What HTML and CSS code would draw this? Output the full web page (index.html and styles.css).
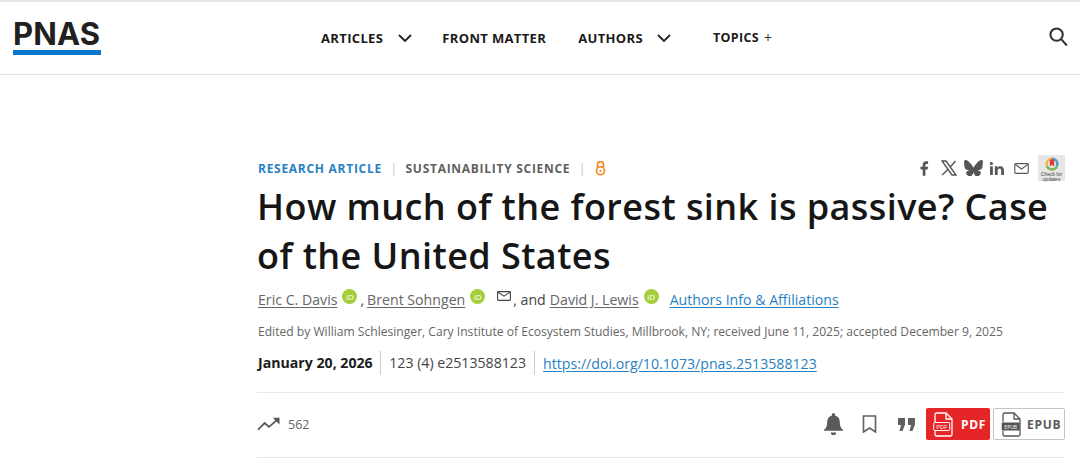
FILE: index.html
```html
<!DOCTYPE html>
<html lang="en">
<head>
<meta charset="utf-8">
<title>PNAS article</title>
<link rel="stylesheet" href="styles.css">
</head>
<body>
<header class="site-header">
  <a class="logo"><span class="logo-text">PNAS</span></a>
  <nav class="nav">
    <a class="nav-item nav-articles">ARTICLES<svg class="chev" viewBox="0 0 14 8"><path d="M1 1l6 6 6-6"/></svg></a>
    <a class="nav-item nav-front">FRONT MATTER</a>
    <a class="nav-item nav-authors">AUTHORS<svg class="chev" viewBox="0 0 14 8"><path d="M1 1l6 6 6-6"/></svg></a>
    <a class="nav-item nav-topics">TOPICS<span class="plus">+</span></a>
  </nav>
  <svg class="search" viewBox="0 0 20 20"><circle cx="8" cy="8" r="6.500"/><path d="M12.800 12.800L18.800 19.500"/></svg>
</header>
<main class="article">
  <div class="meta-row">
    <div class="crumbs">
      <span class="type">RESEARCH ARTICLE</span><span class="bar">|</span><span class="subject">SUSTAINABILITY SCIENCE</span><span class="bar">|</span>
      <svg class="oa" viewBox="0 0 11 15"><path d="M2.500 6.500V3.600a3 3 0 0 1 6 0V6.500"/><circle cx="5.500" cy="9.800" r="4"/><circle cx="5.500" cy="9.800" r="1" class="oa-dot"/></svg>
    </div>
    <div class="share">
      <svg class="s-f" viewBox="0 0 10 16"><path d="M3 16V9H.5V6H3V4c0-2.600 1.500-4 3.800-4H9v3H7.400C6.300 3 6 3.500 6 4.300V6h3l-.5 3H6v7z"/></svg>
      <svg class="s-x" viewBox="0 0 16 16"><path class="x-line" d="M1 1l4 0 10 14-4 0zM14.500 1L9 7.200M6.800 9.600L1.200 15"/></svg>
      <svg class="s-b" viewBox="0 0 20 17"><path d="M4.400 1.200C6.700 2.900 9.100 6.400 10 8.200c.9-1.800 3.300-5.300 5.600-7C17.200 0 20 -.9 20 2.200c0 .6-.4 5.200-.6 5.900-.7 2.500-3.200 3.100-5.500 2.700 4 .7 5 2.900 2.800 5.200-4.200 4.300-6-1.100-6.500-2.500-.1-.3-.2-.4-.2-.3 0-.1-.1 0-.2.300-.5 1.400-2.300 6.800-6.500 2.500-2.200-2.300-1.200-4.500 2.800-5.200-2.300.4-4.800-.2-5.500-2.700C.4 7.400 0 2.800 0 2.200 0-.9 2.800 0 4.400 1.200z"/></svg>
      <svg class="s-in" viewBox="0 0 16 15"><rect x="0" y="5" width="3.200" height="10"/><circle cx="1.600" cy="1.800" r="1.800"/><path d="M5.500 5h3v1.500C9 5.500 10.200 4.800 11.700 4.800 14.800 4.800 16 6.700 16 9.600V15h-3.200v-5c0-1.500-.5-2.400-1.800-2.400-1.300 0-2.300.9-2.300 2.500V15H5.500z"/></svg>
      <svg class="s-m" viewBox="0 0 16 12"><rect x=".7" y=".7" width="14.600" height="10.600" rx="1"/><path d="M1 1.500l7 5 7-5"/></svg>
      <div class="check">
        <svg class="check-ring" viewBox="0 0 14 14"><circle cx="7" cy="7" r="6.500" fill="#f4b63d"/><path d="M7 .5a6.500 6.500 0 0 1 6.500 6.500A6.500 6.500 0 0 1 7 13.500z" fill="#4a9fd0"/><path d="M.8 9A6.500 6.500 0 0 0 7 13.500 6.500 6.500 0 0 0 13.200 9z" fill="#7fb75a"/><circle cx="7" cy="7" r="4" fill="#eee"/><path d="M4.800 2.500h4.400v7L7 8 4.800 9.500z" fill="#e03a3e"/></svg>
        <span class="check-text">Check for updates</span>
      </div>
    </div>
  </div>
  <h1 class="title">How much of the forest sink is passive? Case of the United States</h1>
  <div class="authors">
    <a class="author">Eric C. Davis</a><span class="orcid">iD</span><span class="sep">,</span>
    <a class="author">Brent Sohngen</a><span class="orcid">iD</span>
    <svg class="mail" viewBox="0 0 14 10"><rect x=".6" y=".6" width="12.800" height="8.800" rx=".8"/><path d="M1 1.200l6 4 6-4"/></svg><span class="sep">, and</span>
    <a class="author">David J. Lewis</a><span class="orcid">iD</span>
    <a class="affil">Authors Info &amp; Affiliations</a>
  </div>
  <p class="edited">Edited by William Schlesinger, Cary Institute of Ecosystem Studies, Millbrook, NY; received June 11, 2025; accepted December 9, 2025</p>
  <div class="pub">
    <strong class="pub-date">January 20, 2026</strong>
    <span class="pub-vol">123 (4) e2513588123</span>
    <a class="pub-doi">https://doi.org/10.1073/pnas.2513588123</a>
  </div>
  <div class="tools">
    <div class="metric">
      <svg class="trend" viewBox="0 0 24 14"><path d="M1 13l7-7 4.500 4L22 2"/><path class="fill" d="M16.500 0.500H23.500V7.500z"/></svg>
      <span>562</span>
    </div>
    <div class="actions">
      <svg class="bell" viewBox="0 0 18 21"><path d="M9 0a1.500 1.500 0 0 1 1.500 1.500v.9C13.500 3.100 15 5.600 15 8.500c0 4 1 5.700 3 7.500v1H0v-1c2-1.800 3-3.500 3-7.500 0-2.900 1.500-5.400 4.500-6.100v-.9A1.500 1.500 0 0 1 9 0zM6.500 18.500h5a2.500 2.500 0 0 1-5 0z"/></svg>
      <svg class="bookmark" viewBox="0 0 14 18"><path d="M1 1h12v16l-6-4-6 4z"/></svg>
      <svg class="quote" viewBox="0 0 17 13"><path d="M0 0h7v6.500L4.500 13H1.500L3 7H0zM10 0h7v6.500L14.500 13h-3L13 7h-3z"/></svg>
      <a class="btn btn-pdf">
        <svg class="file" viewBox="0 0 20 25"><path class="file-o" d="M2 10V2.500A1.500 1.500 0 0 1 3.500 1H13l6 6v15.500a1.500 1.500 0 0 1-1.500 1.500h-14A1.500 1.500 0 0 1 2 22.500V19M13 1v6h6"/><rect class="file-tag" x=".7" y="10.500" width="16" height="8" rx="1"/><text x="8.700" y="17" class="tag-text">PDF</text></svg>
        PDF
      </a>
      <a class="btn btn-epub">
        <svg class="file" viewBox="0 0 20 25"><path class="file-o" d="M2 10V2.500A1.500 1.500 0 0 1 3.500 1H13l6 6v15.500a1.500 1.500 0 0 1-1.500 1.500h-14A1.500 1.500 0 0 1 2 22.500V19M13 1v6h6"/><rect class="file-tag" x=".7" y="10.500" width="18" height="8" rx="1"/><text x="9.700" y="16.800" class="tag-text">EPUB</text></svg>
        EPUB
      </a>
    </div>
  </div>
</main>
</body>
</html>
```

FILE: styles.css
```css
* { box-sizing: border-box; }
html, body { margin: 0; padding: 0; }
body {
  width: 1080px;
  height: 468px;
  overflow: hidden;
  background: #fff;
  color: #1f1f1f;
  font-family: "Open Sans", sans-serif;
}
.site-header {
  height: 75px;
  border-top: 2px solid #e6e6e6;
  border-bottom: 1px solid #e0e0e0;
  display: flex;
  align-items: center;
  padding: 0 13px;
}
.logo {
  display: block;
  width: 88px;
  border-bottom: 5px solid #0a78cf;
  height: 33px;
  margin-top: 1px;
}
.logo-text {
  display: block;
  font-family: Inter, sans-serif;
  font-size: 31px;
  line-height: 23px;
  font-weight: 700;
  color: #231f20;
  letter-spacing: .1px;
  white-space: nowrap;
}
.nav {
  display: flex;
  align-items: center;
  margin-left: 220px;
  width: 460px;
  color: #1a1a1a;
}
.nav-item {
  display: flex;
  align-items: center;
  font-size: 13px;
  font-weight: 700;
  letter-spacing: .35px;
  white-space: nowrap;
}
.nav-front { margin-left: 30px; }
.nav-authors { margin-left: 32px; }
.nav-topics { margin-left: 42px; margin-top: -1px; font-size: 12.500px; }
.plus { font-weight: 400; margin-left: 5px; font-size: 14px; color: #333; }
.chev {
  width: 14px;
  height: 8px;
  margin-left: 14px;
  fill: none;
  stroke: #222;
  stroke-width: 1.800;
}
.nav-articles .chev { margin-left: 15px; }
.search {
  width: 19px;
  height: 19px;
  margin-left: auto;
  margin-right: -1px;
  margin-top: -3px;
  fill: none;
  stroke: #333;
  stroke-width: 2.200;
}
.article {
  width: 808px;
  margin-left: 257px;
  padding-top: 81px;
}
.meta-row {
  display: flex;
  justify-content: space-between;
  align-items: center;
  height: 24px;
}
.crumbs {
  display: flex;
  align-items: center;
  font-size: 12px;
  font-weight: 700;
  letter-spacing: .72px;
  padding-left: 1px;
}
.type { color: #2a7fc1; }
.subject { color: #5f5f5f; }
.bar { color: #c4c4c4; font-weight: 400; margin: 0 8.500px; font-size: 12px; letter-spacing: 0; }
.oa {
  width: 11px;
  height: 15px;
  fill: none;
  stroke: #f68212;
  stroke-width: 1.600;
  margin-left: 1px;
}
.oa .oa-dot { fill: #f68212; stroke: none; }
.share { display: flex; align-items: center; }
.share svg { display: block; }
.s-f { width: 9px; height: 15px; fill: #555; margin-right: 12px; margin-left: -1px; }
.s-x { width: 16px; height: 16px; fill: none; stroke: #555; stroke-width: 1.400; margin-right: 7px; }
.s-b { width: 19px; height: 16px; fill: #555; margin-right: 7px; }
.s-in { width: 14px; height: 13px; fill: #555; margin-right: 10px; }
.s-m { width: 15px; height: 11px; fill: none; stroke: #555; stroke-width: 1.200; margin-right: 9px; }
.check {
  width: 27px;
  height: 26px;
  background: #e6e6e6;
  display: flex;
  flex-direction: column;
  align-items: center;
  padding-top: 2px;
}
.share svg.check-ring { width: 14px; height: 14px; }
.check-text {
  font-family: "Liberation Sans", sans-serif;
  font-size: 5px;
  line-height: 4.500px;
  text-align: center;
  color: #444;
  margin-top: 1px;
  width: 27px;
}
.title {
  margin: 3px 0 0;
  font-size: 36px;
  line-height: 48.500px;
  font-weight: 600;
  color: #161616;
  letter-spacing: .43px;
}
.authors {
  display: flex;
  align-items: center;
  margin-top: 7px;
  padding-left: 1px;
  height: 24px;
  font-size: 14.150px;
  color: #444;
  white-space: nowrap;
}
.author { text-decoration: underline; text-underline-offset: 2px; color: #666; }
.sep { color: #444; }
.orcid {
  width: 15px;
  height: 15px;
  border-radius: 50%;
  background: #a6ce39;
  color: #fff;
  font-size: 8px;
  line-height: 15px;
  text-align: center;
  margin: -6px 7px 0 5px;
  flex: none;
}
.authors .orcid + .sep { margin-left: -4px; margin-right: 3px; }
.mail {
  width: 14px;
  height: 10px;
  fill: none;
  stroke: #444;
  stroke-width: 1.100;
  margin: -7px 0 0 5px;
  flex: none;
}
.mail + .sep { margin-left: 2px; margin-right: 4px; }
.affil {
  color: #2a7fc1;
  text-decoration: underline;
  text-underline-offset: 2px;
  margin-left: 4px;
}
.edited {
  margin: 11px 0 0;
  padding-left: 1px;
  font-size: 12.100px;
  line-height: 20px;
  color: #666;
  white-space: nowrap;
}
.pub {
  display: flex;
  align-items: center;
  margin-top: 9px;
  padding-left: 1px;
  height: 24px;
  font-size: 14.150px;
  white-space: nowrap;
  padding-bottom: 17px;
  box-sizing: content-box;
  border-bottom: 1px solid #e8e8e8;
}
.pub-date { font-weight: 700; color: #1c1c1c; padding-right: 7.500px; border-right: 1px solid #ccc; line-height: 24px; }
.pub-vol { color: #444; padding: 0 8px; border-right: 1px solid #ccc; line-height: 24px; }
.pub-doi { color: #2a7fc1; text-decoration: underline; text-underline-offset: 2px; margin-left: 8px; }
.tools {
  height: 65px;
  padding-bottom: 2px;
  display: flex;
  align-items: center;
  justify-content: space-between;
  border-bottom: 1px solid #e8e8e8;
}
.metric { display: flex; align-items: center; font-size: 12.500px; color: #666; }
.trend { width: 23px; height: 14px; margin-right: 8px; margin-top: -1px; }
.trend path { fill: none; stroke: #555; stroke-width: 1.800; }
.trend path.fill { fill: #555; stroke: none; }
.actions { display: flex; align-items: center; }
.bell { width: 19px; height: 22px; fill: #5a5a5a; margin-right: 19px; }
.bookmark { width: 15px; height: 18px; fill: none; stroke: #5f5f5f; stroke-width: 1.600; margin-right: 21px; }
.quote { width: 17px; height: 13px; fill: #5f5f5f; margin-right: 11px; }
.btn {
  display: flex;
  align-items: center;
  height: 32px;
  border-radius: 2px;
  font-size: 12px;
  font-weight: 700;
  letter-spacing: .7px;
  padding-left: 7px;
}
.btn-pdf {
  width: 64px;
  background: #e52528;
  color: #fff;
  margin-right: 3px;
}
.btn-epub {
  width: 72px;
  border: 1px solid #c4c4c4;
  color: #5a5a5a;
}
.file { width: 20px; height: 25px; margin-right: 8px; flex: none; }
.btn-epub .file { margin-right: 6px; }
.file-o { fill: none; stroke-width: 1.300; }
.tag-text {
  font-size: 6px;
  font-weight: 400;
  letter-spacing: 0;
  text-anchor: middle;
}
.btn-pdf .file-o { stroke: #fff; }
.btn-pdf .file-tag { fill: none; stroke: #fff; stroke-width: 1; }
.btn-pdf .tag-text { fill: #fff; }
.btn-epub .file-o { stroke: #555; }
.btn-epub .file-tag { fill: #555; }
.btn-epub .tag-text { fill: #fff; font-size: 5px; }
```
